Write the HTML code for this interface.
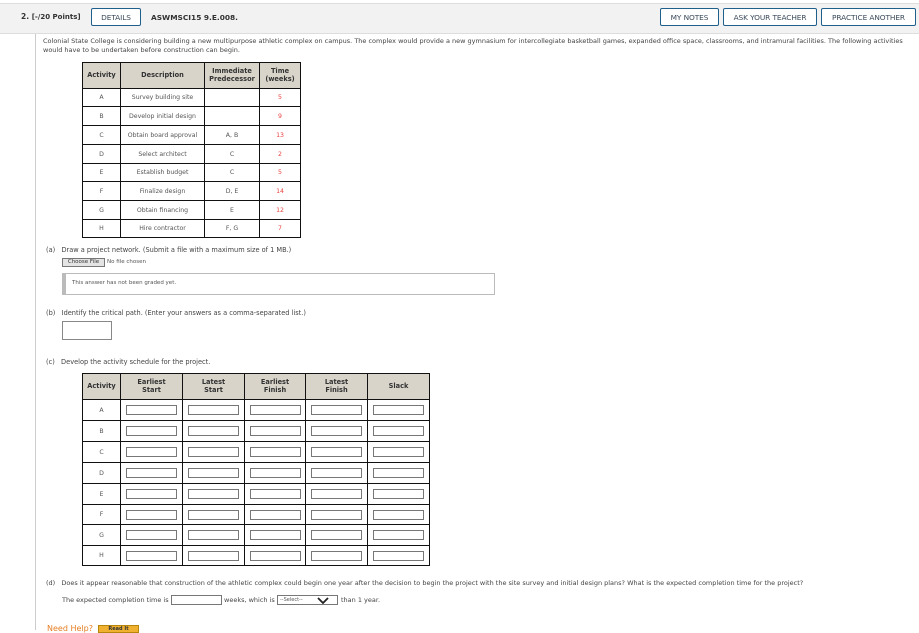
<!DOCTYPE html>
<html><head><meta charset="utf-8"><style>
*{margin:0;padding:0;box-sizing:border-box}
body{width:919px;height:630px;overflow:hidden;background:#fff;font-family:"DejaVu Sans","Liberation Sans",sans-serif;color:#333;position:relative}
.a{position:absolute;white-space:nowrap}
.t{font-size:6.6px;color:#444}
.btn{position:absolute;top:8px;height:18px;border:1px solid #1f5f8b;border-radius:2px;background:#fff;font-size:7.4px;color:#3a4a5a;display:flex;align-items:center;justify-content:center;letter-spacing:-0.1px}
table{position:absolute;border-collapse:collapse;font-size:6.2px;color:#555}
td,th{border:1px solid #111;text-align:center;padding:0}
th{background:#d8d4ca;color:#333;font-weight:bold;font-size:6.6px;line-height:7.5px}
.r{color:#e8413f}
.in{display:inline-block;width:51px;height:10px;border:1px solid #777;vertical-align:middle}
</style></head><body>
<div class="a" style="left:0;top:3px;width:919px;height:31px;background:#f2f2f2;border-top:1px solid #ddd;border-bottom:1px solid #ddd"></div>
<div class="a" style="left:21px;top:12px;font-size:7.5px;font-weight:bold;color:#333">2. <span style="font-size:7px">[-/20 Points]</span></div>
<div class="btn" style="left:91px;width:50px">DETAILS</div>
<div class="a" style="left:151px;top:13px;font-size:7.4px;font-weight:bold;color:#333">ASWMSCI15 9.E.008.</div>
<div class="btn" style="left:660px;width:59px">MY NOTES</div>
<div class="btn" style="left:723px;width:94px">ASK YOUR TEACHER</div>
<div class="btn" style="left:821px;width:95px">PRACTICE ANOTHER</div>
<div class="a" style="left:35px;top:34px;width:1px;height:596px;background:#ccc"></div>
<div class="a t" style="left:43px;top:37px;line-height:9px;font-size:6.5px">Colonial State College is considering building a new multipurpose athletic complex on campus. The complex would provide a new gymnasium for intercollegiate basketball games, expanded office space, classrooms, and intramural facilities. The following activities<br>would have to be undertaken before construction can begin.</div>

<table style="left:82px;top:62px;width:219px">
<tr style="height:26px"><th style="width:38px">Activity</th><th style="width:84px">Description</th><th style="width:55px">Immediate<br>Predecessor</th><th>Time<br>(weeks)</th></tr>
<tr style="height:18px"><td>A</td><td>Survey building site</td><td></td><td class="r">5</td></tr>
<tr style="height:19px"><td>B</td><td>Develop initial design</td><td></td><td class="r">9</td></tr>
<tr style="height:19px"><td>C</td><td>Obtain board approval</td><td>A, B</td><td class="r">13</td></tr>
<tr style="height:19px"><td>D</td><td>Select architect</td><td>C</td><td class="r">2</td></tr>
<tr style="height:18px"><td>E</td><td>Establish budget</td><td>C</td><td class="r">5</td></tr>
<tr style="height:19px"><td>F</td><td>Finalize design</td><td>D, E</td><td class="r">14</td></tr>
<tr style="height:19px"><td>G</td><td>Obtain financing</td><td>E</td><td class="r">12</td></tr>
<tr style="height:18px"><td>H</td><td>Hire contractor</td><td>F, G</td><td class="r">7</td></tr>
</table>

<div class="a t" style="left:46px;top:246px">(a)&nbsp;&nbsp; Draw a project network. (Submit a file with a maximum size of 1 MB.)</div>
<div class="a" style="left:62px;top:258px;width:43px;height:9px;border:1px solid #777;background:#e4e4e4;font-size:5.5px;color:#333;text-align:center;line-height:7px">Choose File</div>
<div class="a" style="left:107px;top:259px;font-size:5.5px;color:#555">No file chosen</div>
<div class="a" style="left:62px;top:273px;width:433px;height:22px;border:1px solid #bbb;border-left:4px solid #bbb"></div>
<div class="a" style="left:72px;top:280px;font-size:5.5px;color:#555">This answer has not been graded yet.</div>
<div class="a t" style="left:46px;top:309px">(b)&nbsp;&nbsp; Identify the critical path. (Enter your answers as a comma-separated list.)</div>
<div class="a" style="left:62px;top:321px;width:50px;height:19px;border:1px solid #888"></div>
<div class="a t" style="left:46px;top:358px">(c)&nbsp;&nbsp; Develop the activity schedule for the project.</div>

<table style="left:82px;top:373px;width:348px">
<tr style="height:26px"><th style="width:38px">Activity</th><th style="width:62px">Earliest<br>Start</th><th style="width:62px">Latest<br>Start</th><th style="width:61px">Earliest<br>Finish</th><th style="width:62px">Latest<br>Finish</th><th>Slack</th></tr>
<tr style="height:21px"><td>A</td><td><span class="in"></span></td><td><span class="in"></span></td><td><span class="in"></span></td><td><span class="in"></span></td><td><span class="in"></span></td></tr>
<tr style="height:21px"><td>B</td><td><span class="in"></span></td><td><span class="in"></span></td><td><span class="in"></span></td><td><span class="in"></span></td><td><span class="in"></span></td></tr>
<tr style="height:21px"><td>C</td><td><span class="in"></span></td><td><span class="in"></span></td><td><span class="in"></span></td><td><span class="in"></span></td><td><span class="in"></span></td></tr>
<tr style="height:21px"><td>D</td><td><span class="in"></span></td><td><span class="in"></span></td><td><span class="in"></span></td><td><span class="in"></span></td><td><span class="in"></span></td></tr>
<tr style="height:21px"><td>E</td><td><span class="in"></span></td><td><span class="in"></span></td><td><span class="in"></span></td><td><span class="in"></span></td><td><span class="in"></span></td></tr>
<tr style="height:20px"><td>F</td><td><span class="in"></span></td><td><span class="in"></span></td><td><span class="in"></span></td><td><span class="in"></span></td><td><span class="in"></span></td></tr>
<tr style="height:21px"><td>G</td><td><span class="in"></span></td><td><span class="in"></span></td><td><span class="in"></span></td><td><span class="in"></span></td><td><span class="in"></span></td></tr>
<tr style="height:20px"><td>H</td><td><span class="in"></span></td><td><span class="in"></span></td><td><span class="in"></span></td><td><span class="in"></span></td><td><span class="in"></span></td></tr>
</table>

<div class="a t" style="left:46px;top:579px;font-size:6.5px">(d)&nbsp;&nbsp; Does it appear reasonable that construction of the athletic complex could begin one year after the decision to begin the project with the site survey and initial design plans? What is the expected completion time for the project?</div>
<div class="a t" style="left:62px;top:596px;font-size:6.5px">The expected completion time is</div>
<div class="a" style="left:171px;top:595px;width:51px;height:10px;border:1px solid #777"></div>
<div class="a t" style="left:224px;top:596px;font-size:6.5px">weeks, which is</div>
<div class="a" style="left:277px;top:595px;width:61px;height:10px;border:1px solid #777;font-size:5px;color:#555;padding-left:2px;line-height:8px">--Select--
<svg style="position:absolute;right:8px;top:1px" width="12" height="7" viewBox="0 0 12 7"><path d="M1 1 L6 6 L11 1" stroke="#222" stroke-width="1.8" fill="none"/></svg></div>
<div class="a t" style="left:341px;top:596px;font-size:6.5px">than 1 year.</div>
<div class="a" style="left:47px;top:624px;font-size:8px;color:#e67e22">Need Help?</div>
<div class="a" style="left:98px;top:625px;width:41px;height:8px;background:#f0b030;border:1px solid #b8860b;font-size:5px;font-weight:bold;color:#333;text-align:center">Read It</div>
</body></html>
